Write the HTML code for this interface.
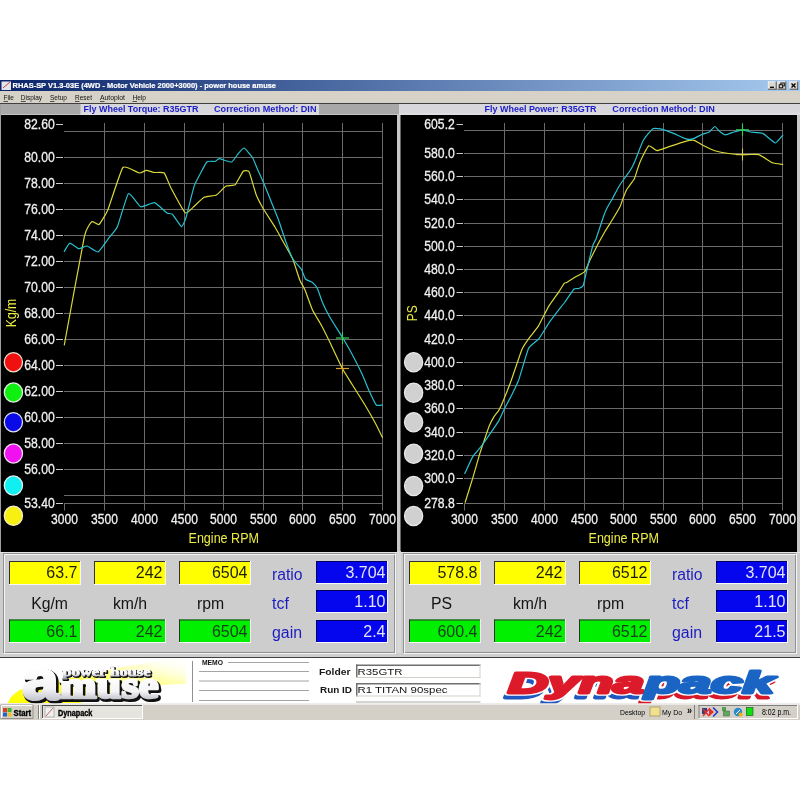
<!DOCTYPE html>
<html><head><meta charset="utf-8"><style>
html,body{margin:0;padding:0;background:#fff;}
svg{display:block;will-change:transform;}
</style></head><body>
<svg width="800" height="800" viewBox="0 0 800 800" shape-rendering="auto">
<defs><linearGradient id="tb" x1="0" x2="1" y1="0" y2="0"><stop offset="0" stop-color="#0a246a"/><stop offset="1" stop-color="#a6caf0"/></linearGradient><linearGradient id="silver" x1="0" x2="0" y1="0" y2="1"><stop offset="0" stop-color="#9a9a9a"/><stop offset="0.35" stop-color="#f4f4f4"/><stop offset="1" stop-color="#6a6a78"/></linearGradient><linearGradient id="swoosh" x1="0" x2="1" y1="1" y2="0"><stop offset="0" stop-color="#ffff20"/><stop offset="0.5" stop-color="#ffff90"/><stop offset="1" stop-color="#ffffff" stop-opacity="0"/></linearGradient></defs>
<rect x="0" y="0" width="800" height="800" fill="#ffffff" />
<rect x="0" y="80" width="800" height="640" fill="#d4d0c8" />
<rect x="0" y="80" width="800" height="11" fill="url(#tb)" />
<rect x="1.5" y="81.5" width="9.5" height="8.5" fill="#e4e2ec" />
<line x1="3" y1="88" x2="10" y2="82" stroke="#c04040" stroke-width="1" />
<text x="12.5" y="88.2" font-family="Liberation Sans" font-size="7.8" font-weight="bold" fill="#fff" text-anchor="start" textLength="263.5" lengthAdjust="spacingAndGlyphs" stroke="#fff" stroke-width="0.2">RHAS-SP V1.3-03E  (4WD - Motor Vehicle 2000+3000) - power house amuse</text>
<rect x="768" y="81.5" width="8.5" height="8" fill="#dcd8d0" />
<line x1="768" y1="81.8" x2="776.5" y2="81.8" stroke="#ffffff" stroke-width="0.6" />
<line x1="768.3" y1="81.5" x2="768.3" y2="89.5" stroke="#ffffff" stroke-width="0.6" />
<line x1="768" y1="89.2" x2="776.5" y2="89.2" stroke="#303030" stroke-width="0.8" />
<line x1="776.2" y1="81.5" x2="776.2" y2="89.5" stroke="#303030" stroke-width="0.8" />
<rect x="777.5" y="81.5" width="8.5" height="8" fill="#dcd8d0" />
<line x1="777.5" y1="81.8" x2="786.0" y2="81.8" stroke="#ffffff" stroke-width="0.6" />
<line x1="777.8" y1="81.5" x2="777.8" y2="89.5" stroke="#ffffff" stroke-width="0.6" />
<line x1="777.5" y1="89.2" x2="786.0" y2="89.2" stroke="#303030" stroke-width="0.8" />
<line x1="785.7" y1="81.5" x2="785.7" y2="89.5" stroke="#303030" stroke-width="0.8" />
<rect x="789.5" y="81.5" width="8.5" height="8" fill="#dcd8d0" />
<line x1="789.5" y1="81.8" x2="798.0" y2="81.8" stroke="#ffffff" stroke-width="0.6" />
<line x1="789.8" y1="81.5" x2="789.8" y2="89.5" stroke="#ffffff" stroke-width="0.6" />
<line x1="789.5" y1="89.2" x2="798.0" y2="89.2" stroke="#303030" stroke-width="0.8" />
<line x1="797.7" y1="81.5" x2="797.7" y2="89.5" stroke="#303030" stroke-width="0.8" />
<line x1="770" y1="87.3" x2="774" y2="87.3" stroke="#000" stroke-width="1.3" />
<rect x="780.8" y="83" width="3.5" height="3" fill="none" stroke="#000" stroke-width="0.9"/>
<rect x="779.2" y="84.8" width="3.5" height="3" fill="#dcd8d0" stroke="#000" stroke-width="0.9"/>
<line x1="791.5" y1="83.5" x2="795.5" y2="87.5" stroke="#000" stroke-width="1.2" />
<line x1="795.5" y1="83.5" x2="791.5" y2="87.5" stroke="#000" stroke-width="1.2" />
<rect x="0" y="91" width="800" height="12.5" fill="#d6d2c8" />
<text x="3.5" y="100.2" font-family="Liberation Sans" font-size="7.8" font-weight="normal" fill="#101010" text-anchor="start" textLength="10.5" lengthAdjust="spacingAndGlyphs" >File</text>
<line x1="3.5" y1="101.5" x2="8.0" y2="101.5" stroke="#303030" stroke-width="0.8" />
<text x="20.8" y="100.2" font-family="Liberation Sans" font-size="7.8" font-weight="normal" fill="#101010" text-anchor="start" textLength="21.2" lengthAdjust="spacingAndGlyphs" >Display</text>
<line x1="20.8" y1="101.5" x2="25.8" y2="101.5" stroke="#303030" stroke-width="0.8" />
<text x="50" y="100.2" font-family="Liberation Sans" font-size="7.8" font-weight="normal" fill="#101010" text-anchor="start" textLength="17" lengthAdjust="spacingAndGlyphs" >Setup</text>
<line x1="50" y1="101.5" x2="54.5" y2="101.5" stroke="#303030" stroke-width="0.8" />
<text x="75" y="100.2" font-family="Liberation Sans" font-size="7.8" font-weight="normal" fill="#101010" text-anchor="start" textLength="17" lengthAdjust="spacingAndGlyphs" >Reset</text>
<line x1="75" y1="101.5" x2="79.5" y2="101.5" stroke="#303030" stroke-width="0.8" />
<text x="100" y="100.2" font-family="Liberation Sans" font-size="7.8" font-weight="normal" fill="#101010" text-anchor="start" textLength="25" lengthAdjust="spacingAndGlyphs" >Autoplot</text>
<line x1="100" y1="101.5" x2="104.5" y2="101.5" stroke="#303030" stroke-width="0.8" />
<text x="132.5" y="100.2" font-family="Liberation Sans" font-size="7.8" font-weight="normal" fill="#101010" text-anchor="start" textLength="13.5" lengthAdjust="spacingAndGlyphs" >Help</text>
<line x1="132.5" y1="101.5" x2="137.0" y2="101.5" stroke="#303030" stroke-width="0.8" />
<line x1="0" y1="103.5" x2="800" y2="103.5" stroke="#404040" stroke-width="1" />
<rect x="0" y="104" width="800" height="11" fill="#d8d8dc" />
<line x1="0" y1="114" x2="800" y2="114" stroke="#e6e6e6" stroke-width="1" />
<rect x="0" y="104" width="80.5" height="10.5" fill="#a8a8a8" />
<rect x="319" y="104" width="80" height="10.5" fill="#a8a8a8" />
<text x="83.5" y="111.8" font-family="Liberation Sans" font-size="8.6" font-weight="bold" fill="#1c1cc8" text-anchor="start" textLength="115" lengthAdjust="spacingAndGlyphs" >Fly Wheel Torque: R35GTR</text>
<text x="214" y="111.8" font-family="Liberation Sans" font-size="8.6" font-weight="bold" fill="#1c1cc8" text-anchor="start" textLength="102.5" lengthAdjust="spacingAndGlyphs" >Correction Method: DIN</text>
<text x="484.6" y="111.8" font-family="Liberation Sans" font-size="8.6" font-weight="bold" fill="#1c1cc8" text-anchor="start" textLength="112" lengthAdjust="spacingAndGlyphs" >Fly Wheel Power: R35GTR</text>
<text x="612.3" y="111.8" font-family="Liberation Sans" font-size="8.6" font-weight="bold" fill="#1c1cc8" text-anchor="start" textLength="102.5" lengthAdjust="spacingAndGlyphs" >Correction Method: DIN</text>
<rect x="0" y="115" width="397" height="437" fill="#000" />
<rect x="0" y="104" width="1" height="453" fill="#a0a0a0" />
<rect x="397" y="115" width="3.5" height="437" fill="#c8c8c8" />
<rect x="400.5" y="115" width="397" height="437" fill="#000" />
<rect x="797" y="115" width="3" height="437" fill="#c8c8c8" />
<line x1="64.0" y1="131.5" x2="383.0" y2="131.5" stroke="#6a6a6a" stroke-width="1" />
<line x1="64.0" y1="157.5" x2="383.0" y2="157.5" stroke="#6a6a6a" stroke-width="1" />
<line x1="64.0" y1="183.5" x2="383.0" y2="183.5" stroke="#6a6a6a" stroke-width="1" />
<line x1="64.0" y1="209.5" x2="383.0" y2="209.5" stroke="#6a6a6a" stroke-width="1" />
<line x1="64.0" y1="235.5" x2="383.0" y2="235.5" stroke="#6a6a6a" stroke-width="1" />
<line x1="64.0" y1="261.5" x2="383.0" y2="261.5" stroke="#6a6a6a" stroke-width="1" />
<line x1="64.0" y1="287.5" x2="383.0" y2="287.5" stroke="#6a6a6a" stroke-width="1" />
<line x1="64.0" y1="313.5" x2="383.0" y2="313.5" stroke="#6a6a6a" stroke-width="1" />
<line x1="64.0" y1="339.5" x2="383.0" y2="339.5" stroke="#6a6a6a" stroke-width="1" />
<line x1="64.0" y1="365.5" x2="383.0" y2="365.5" stroke="#6a6a6a" stroke-width="1" />
<line x1="64.0" y1="391.5" x2="383.0" y2="391.5" stroke="#6a6a6a" stroke-width="1" />
<line x1="64.0" y1="417.5" x2="383.0" y2="417.5" stroke="#6a6a6a" stroke-width="1" />
<line x1="64.0" y1="443.5" x2="383.0" y2="443.5" stroke="#6a6a6a" stroke-width="1" />
<line x1="64.0" y1="469.5" x2="383.0" y2="469.5" stroke="#6a6a6a" stroke-width="1" />
<line x1="64.0" y1="495.5" x2="383.0" y2="495.5" stroke="#6a6a6a" stroke-width="1" />
<line x1="64.0" y1="503.5" x2="383.0" y2="503.5" stroke="#6a6a6a" stroke-width="1" />
<line x1="64.5" y1="503" x2="64.5" y2="510.5" stroke="#6a6a6a" stroke-width="1" />
<line x1="104.5" y1="123" x2="104.5" y2="510.5" stroke="#6a6a6a" stroke-width="1" />
<line x1="144.5" y1="123" x2="144.5" y2="510.5" stroke="#6a6a6a" stroke-width="1" />
<line x1="184.5" y1="123" x2="184.5" y2="510.5" stroke="#6a6a6a" stroke-width="1" />
<line x1="223.5" y1="123" x2="223.5" y2="510.5" stroke="#6a6a6a" stroke-width="1" />
<line x1="263.5" y1="123" x2="263.5" y2="510.5" stroke="#6a6a6a" stroke-width="1" />
<line x1="302.5" y1="123" x2="302.5" y2="510.5" stroke="#6a6a6a" stroke-width="1" />
<line x1="342.5" y1="123" x2="342.5" y2="510.5" stroke="#6a6a6a" stroke-width="1" />
<line x1="382.5" y1="123" x2="382.5" y2="510.5" stroke="#6a6a6a" stroke-width="1" />
<text x="54.8" y="129.0" font-family="Liberation Sans" font-size="15" font-weight="normal" fill="#f2f2f2" text-anchor="end" textLength="30.5" lengthAdjust="spacingAndGlyphs" stroke="#f0f0f0" stroke-width="0.3">82.60</text>
<line x1="56" y1="124.5" x2="63" y2="124.5" stroke="#c8c8c8" stroke-width="1" />
<text x="54.8" y="162.0" font-family="Liberation Sans" font-size="15" font-weight="normal" fill="#f2f2f2" text-anchor="end" textLength="30.5" lengthAdjust="spacingAndGlyphs" stroke="#f0f0f0" stroke-width="0.3">80.00</text>
<line x1="56" y1="157.5" x2="63" y2="157.5" stroke="#c8c8c8" stroke-width="1" />
<text x="54.8" y="188.0" font-family="Liberation Sans" font-size="15" font-weight="normal" fill="#f2f2f2" text-anchor="end" textLength="30.5" lengthAdjust="spacingAndGlyphs" stroke="#f0f0f0" stroke-width="0.3">78.00</text>
<line x1="56" y1="183.5" x2="63" y2="183.5" stroke="#c8c8c8" stroke-width="1" />
<text x="54.8" y="214.0" font-family="Liberation Sans" font-size="15" font-weight="normal" fill="#f2f2f2" text-anchor="end" textLength="30.5" lengthAdjust="spacingAndGlyphs" stroke="#f0f0f0" stroke-width="0.3">76.00</text>
<line x1="56" y1="209.5" x2="63" y2="209.5" stroke="#c8c8c8" stroke-width="1" />
<text x="54.8" y="240.0" font-family="Liberation Sans" font-size="15" font-weight="normal" fill="#f2f2f2" text-anchor="end" textLength="30.5" lengthAdjust="spacingAndGlyphs" stroke="#f0f0f0" stroke-width="0.3">74.00</text>
<line x1="56" y1="235.5" x2="63" y2="235.5" stroke="#c8c8c8" stroke-width="1" />
<text x="54.8" y="266.0" font-family="Liberation Sans" font-size="15" font-weight="normal" fill="#f2f2f2" text-anchor="end" textLength="30.5" lengthAdjust="spacingAndGlyphs" stroke="#f0f0f0" stroke-width="0.3">72.00</text>
<line x1="56" y1="261.5" x2="63" y2="261.5" stroke="#c8c8c8" stroke-width="1" />
<text x="54.8" y="292.0" font-family="Liberation Sans" font-size="15" font-weight="normal" fill="#f2f2f2" text-anchor="end" textLength="30.5" lengthAdjust="spacingAndGlyphs" stroke="#f0f0f0" stroke-width="0.3">70.00</text>
<line x1="56" y1="287.5" x2="63" y2="287.5" stroke="#c8c8c8" stroke-width="1" />
<text x="54.8" y="318.0" font-family="Liberation Sans" font-size="15" font-weight="normal" fill="#f2f2f2" text-anchor="end" textLength="30.5" lengthAdjust="spacingAndGlyphs" stroke="#f0f0f0" stroke-width="0.3">68.00</text>
<line x1="56" y1="313.5" x2="63" y2="313.5" stroke="#c8c8c8" stroke-width="1" />
<text x="54.8" y="344.0" font-family="Liberation Sans" font-size="15" font-weight="normal" fill="#f2f2f2" text-anchor="end" textLength="30.5" lengthAdjust="spacingAndGlyphs" stroke="#f0f0f0" stroke-width="0.3">66.00</text>
<line x1="56" y1="339.5" x2="63" y2="339.5" stroke="#c8c8c8" stroke-width="1" />
<text x="54.8" y="370.0" font-family="Liberation Sans" font-size="15" font-weight="normal" fill="#f2f2f2" text-anchor="end" textLength="30.5" lengthAdjust="spacingAndGlyphs" stroke="#f0f0f0" stroke-width="0.3">64.00</text>
<line x1="56" y1="365.5" x2="63" y2="365.5" stroke="#c8c8c8" stroke-width="1" />
<text x="54.8" y="396.0" font-family="Liberation Sans" font-size="15" font-weight="normal" fill="#f2f2f2" text-anchor="end" textLength="30.5" lengthAdjust="spacingAndGlyphs" stroke="#f0f0f0" stroke-width="0.3">62.00</text>
<line x1="56" y1="391.5" x2="63" y2="391.5" stroke="#c8c8c8" stroke-width="1" />
<text x="54.8" y="422.0" font-family="Liberation Sans" font-size="15" font-weight="normal" fill="#f2f2f2" text-anchor="end" textLength="30.5" lengthAdjust="spacingAndGlyphs" stroke="#f0f0f0" stroke-width="0.3">60.00</text>
<line x1="56" y1="417.5" x2="63" y2="417.5" stroke="#c8c8c8" stroke-width="1" />
<text x="54.8" y="448.0" font-family="Liberation Sans" font-size="15" font-weight="normal" fill="#f2f2f2" text-anchor="end" textLength="30.5" lengthAdjust="spacingAndGlyphs" stroke="#f0f0f0" stroke-width="0.3">58.00</text>
<line x1="56" y1="443.5" x2="63" y2="443.5" stroke="#c8c8c8" stroke-width="1" />
<text x="54.8" y="474.0" font-family="Liberation Sans" font-size="15" font-weight="normal" fill="#f2f2f2" text-anchor="end" textLength="30.5" lengthAdjust="spacingAndGlyphs" stroke="#f0f0f0" stroke-width="0.3">56.00</text>
<line x1="56" y1="469.5" x2="63" y2="469.5" stroke="#c8c8c8" stroke-width="1" />
<text x="54.8" y="508.0" font-family="Liberation Sans" font-size="15" font-weight="normal" fill="#f2f2f2" text-anchor="end" textLength="30.5" lengthAdjust="spacingAndGlyphs" stroke="#f0f0f0" stroke-width="0.3">53.40</text>
<line x1="56" y1="503.5" x2="63" y2="503.5" stroke="#c8c8c8" stroke-width="1" />
<text x="64.5" y="523.8" font-family="Liberation Sans" font-size="15" font-weight="normal" fill="#f2f2f2" text-anchor="middle" textLength="26.8" lengthAdjust="spacingAndGlyphs" stroke="#f0f0f0" stroke-width="0.3">3000</text>
<text x="104.5" y="523.8" font-family="Liberation Sans" font-size="15" font-weight="normal" fill="#f2f2f2" text-anchor="middle" textLength="26.8" lengthAdjust="spacingAndGlyphs" stroke="#f0f0f0" stroke-width="0.3">3500</text>
<text x="144.5" y="523.8" font-family="Liberation Sans" font-size="15" font-weight="normal" fill="#f2f2f2" text-anchor="middle" textLength="26.8" lengthAdjust="spacingAndGlyphs" stroke="#f0f0f0" stroke-width="0.3">4000</text>
<text x="184.5" y="523.8" font-family="Liberation Sans" font-size="15" font-weight="normal" fill="#f2f2f2" text-anchor="middle" textLength="26.8" lengthAdjust="spacingAndGlyphs" stroke="#f0f0f0" stroke-width="0.3">4500</text>
<text x="223.5" y="523.8" font-family="Liberation Sans" font-size="15" font-weight="normal" fill="#f2f2f2" text-anchor="middle" textLength="26.8" lengthAdjust="spacingAndGlyphs" stroke="#f0f0f0" stroke-width="0.3">5000</text>
<text x="263.5" y="523.8" font-family="Liberation Sans" font-size="15" font-weight="normal" fill="#f2f2f2" text-anchor="middle" textLength="26.8" lengthAdjust="spacingAndGlyphs" stroke="#f0f0f0" stroke-width="0.3">5500</text>
<text x="302.5" y="523.8" font-family="Liberation Sans" font-size="15" font-weight="normal" fill="#f2f2f2" text-anchor="middle" textLength="26.8" lengthAdjust="spacingAndGlyphs" stroke="#f0f0f0" stroke-width="0.3">6000</text>
<text x="342.5" y="523.8" font-family="Liberation Sans" font-size="15" font-weight="normal" fill="#f2f2f2" text-anchor="middle" textLength="26.8" lengthAdjust="spacingAndGlyphs" stroke="#f0f0f0" stroke-width="0.3">6500</text>
<text x="382.5" y="523.8" font-family="Liberation Sans" font-size="15" font-weight="normal" fill="#f2f2f2" text-anchor="middle" textLength="26.8" lengthAdjust="spacingAndGlyphs" stroke="#f0f0f0" stroke-width="0.3">7000</text>
<text x="188.5" y="542.8" font-family="Liberation Sans" font-size="14" font-weight="normal" fill="#ecec44" text-anchor="start" textLength="70.5" lengthAdjust="spacingAndGlyphs" >Engine RPM</text>
<text x="0" y="0" font-family="Liberation Sans" font-size="14" fill="#ecec44" text-anchor="middle" textLength="28.5" lengthAdjust="spacingAndGlyphs" transform="translate(16.3,313) rotate(-90)">Kg/m</text>
<path d="M64.30,345.00 C65.64,337.75 82.57,244.52 84.40,236.30 C86.23,228.08 90.83,222.49 91.80,221.70 C92.77,220.91 97.93,225.28 99.00,224.50 C100.07,223.72 106.21,213.80 107.80,210.00 C109.39,206.20 120.79,169.97 122.90,167.50 C125.01,165.03 137.84,172.81 139.40,173.00 C140.96,173.19 145.29,170.33 146.30,170.30 C147.31,170.27 153.31,172.32 154.50,172.50 C155.69,172.68 163.10,171.97 164.20,173.00 C165.30,174.03 169.59,185.34 171.00,188.00 C172.41,190.66 183.83,211.61 185.30,212.90 C186.77,214.19 191.75,208.45 193.00,207.40 C194.25,206.35 202.44,198.03 204.00,197.20 C205.56,196.37 214.93,195.75 216.40,195.00 C217.87,194.25 224.75,186.68 226.00,186.00 C227.25,185.32 234.05,185.79 235.20,184.80 C236.35,183.81 242.27,172.05 243.20,171.20 C244.13,170.35 248.35,170.46 249.20,172.00 C250.05,173.54 255.08,191.83 256.00,194.25 C256.92,196.67 261.72,206.03 263.00,208.25 C264.28,210.47 273.85,225.17 275.25,227.50 C276.65,229.83 282.83,241.15 284.00,243.25 C285.17,245.35 291.70,256.55 292.75,259.00 C293.80,261.45 298.93,277.93 299.75,280.00 C300.57,282.07 304.15,288.00 305.00,290.00 C305.85,292.00 311.42,307.67 312.50,310.00 C313.58,312.33 320.08,322.83 321.25,325.00 C322.42,327.17 328.58,339.58 330.00,342.50 C331.42,345.42 341.00,365.92 342.50,368.75 C344.00,371.58 351.00,382.58 352.50,385.00 C354.00,387.42 363.50,402.50 365.00,405.00 C366.50,407.50 373.83,420.33 375.00,422.50 C376.17,424.67 382.00,436.50 382.50,437.50" fill="none" stroke="#d8d838" stroke-width="1.2" stroke-linejoin="round" stroke-linecap="round"/>
<path d="M64.30,251.40 C64.67,250.85 68.83,243.38 69.80,243.20 C70.77,243.02 77.75,248.51 78.90,248.70 C80.05,248.89 85.82,245.78 87.10,246.00 C88.38,246.22 96.63,252.55 98.10,252.00 C99.57,251.45 107.81,239.39 109.10,237.70 C110.39,236.01 116.11,229.64 117.40,226.70 C118.69,223.76 126.84,194.93 128.40,193.60 C129.96,192.27 139.06,206.19 140.80,206.80 C142.54,207.41 152.76,202.29 154.50,202.70 C156.24,203.11 165.71,212.13 166.90,212.90 C168.09,213.67 171.43,213.38 172.40,214.30 C173.37,215.22 180.58,226.52 181.50,226.70 C182.42,226.88 185.34,219.75 186.20,217.00 C187.06,214.25 193.03,189.07 194.40,185.40 C195.77,181.73 205.43,163.59 206.80,162.00 C208.17,160.41 214.17,161.72 215.00,161.50 C215.83,161.28 218.09,158.67 219.20,158.70 C220.31,158.73 230.35,162.31 231.60,162.00 C232.85,161.69 237.17,154.93 238.00,154.00 C238.83,153.07 243.03,147.77 244.00,148.00 C244.97,148.23 251.58,156.05 252.50,157.50 C253.42,158.95 256.93,167.88 257.75,169.75 C258.57,171.62 263.82,183.28 264.75,185.50 C265.68,187.72 270.82,200.67 271.75,203.00 C272.68,205.33 277.82,217.93 278.75,220.50 C279.68,223.07 284.82,238.93 285.75,241.50 C286.68,244.07 291.70,257.13 292.75,259.00 C293.80,260.87 300.65,268.17 301.50,269.50 C302.35,270.83 304.77,278.13 305.50,279.00 C306.23,279.87 311.70,281.85 312.50,282.50 C313.30,283.15 316.83,287.42 317.50,288.75 C318.17,290.08 321.67,300.58 322.50,302.50 C323.33,304.42 328.67,315.17 330.00,317.50 C331.33,319.83 341.00,335.00 342.50,337.50 C344.00,340.00 351.17,352.50 352.50,355.00 C353.83,357.50 361.42,372.67 362.50,375.00 C363.58,377.33 367.83,388.00 368.75,390.00 C369.67,392.00 375.33,404.00 376.25,405.00 C377.17,406.00 382.08,405.00 382.50,405.00" fill="none" stroke="#28c0d0" stroke-width="1.2" stroke-linejoin="round" stroke-linecap="round"/>
<line x1="336.0" y1="338" x2="349.0" y2="338" stroke="#30d050" stroke-width="1.2" />
<line x1="342.5" y1="332" x2="342.5" y2="344" stroke="#30d050" stroke-width="1.1" />
<line x1="336.0" y1="368.5" x2="349.0" y2="368.5" stroke="#d8a030" stroke-width="1.2" />
<line x1="342.5" y1="362.5" x2="342.5" y2="374.5" stroke="#d8a030" stroke-width="1.1" />
<ellipse cx="13.4" cy="362.2" rx="9.1" ry="9.6" fill="#f01010" stroke="#f0e0d0" stroke-width="1.3"/>
<ellipse cx="13.4" cy="392.5" rx="9.1" ry="9.6" fill="#10f010" stroke="#e0f0e0" stroke-width="1.3"/>
<ellipse cx="13.4" cy="422.2" rx="9.1" ry="9.6" fill="#0a0ae8" stroke="#e0e0f0" stroke-width="1.3"/>
<ellipse cx="13.4" cy="453.5" rx="9.1" ry="9.6" fill="#f010f0" stroke="#f0e0f0" stroke-width="1.3"/>
<ellipse cx="13.4" cy="485.5" rx="9.1" ry="9.6" fill="#10f0f0" stroke="#e0f0f0" stroke-width="1.3"/>
<ellipse cx="13.4" cy="515.8" rx="9.1" ry="9.6" fill="#f8f010" stroke="#f0f0d0" stroke-width="1.3"/>
<line x1="464.0" y1="130.5" x2="783.0" y2="130.5" stroke="#6a6a6a" stroke-width="1" />
<line x1="464.0" y1="153.5" x2="783.0" y2="153.5" stroke="#6a6a6a" stroke-width="1" />
<line x1="464.0" y1="176.5" x2="783.0" y2="176.5" stroke="#6a6a6a" stroke-width="1" />
<line x1="464.0" y1="199.5" x2="783.0" y2="199.5" stroke="#6a6a6a" stroke-width="1" />
<line x1="464.0" y1="223.5" x2="783.0" y2="223.5" stroke="#6a6a6a" stroke-width="1" />
<line x1="464.0" y1="246.5" x2="783.0" y2="246.5" stroke="#6a6a6a" stroke-width="1" />
<line x1="464.0" y1="269.5" x2="783.0" y2="269.5" stroke="#6a6a6a" stroke-width="1" />
<line x1="464.0" y1="292.5" x2="783.0" y2="292.5" stroke="#6a6a6a" stroke-width="1" />
<line x1="464.0" y1="315.5" x2="783.0" y2="315.5" stroke="#6a6a6a" stroke-width="1" />
<line x1="464.0" y1="339.5" x2="783.0" y2="339.5" stroke="#6a6a6a" stroke-width="1" />
<line x1="464.0" y1="362.5" x2="783.0" y2="362.5" stroke="#6a6a6a" stroke-width="1" />
<line x1="464.0" y1="385.5" x2="783.0" y2="385.5" stroke="#6a6a6a" stroke-width="1" />
<line x1="464.0" y1="408.5" x2="783.0" y2="408.5" stroke="#6a6a6a" stroke-width="1" />
<line x1="464.0" y1="432.5" x2="783.0" y2="432.5" stroke="#6a6a6a" stroke-width="1" />
<line x1="464.0" y1="455.5" x2="783.0" y2="455.5" stroke="#6a6a6a" stroke-width="1" />
<line x1="464.0" y1="478.5" x2="783.0" y2="478.5" stroke="#6a6a6a" stroke-width="1" />
<line x1="464.0" y1="503.5" x2="783.0" y2="503.5" stroke="#6a6a6a" stroke-width="1" />
<line x1="464.5" y1="503" x2="464.5" y2="510.5" stroke="#6a6a6a" stroke-width="1" />
<line x1="504.5" y1="123" x2="504.5" y2="510.5" stroke="#6a6a6a" stroke-width="1" />
<line x1="544.5" y1="123" x2="544.5" y2="510.5" stroke="#6a6a6a" stroke-width="1" />
<line x1="584.5" y1="123" x2="584.5" y2="510.5" stroke="#6a6a6a" stroke-width="1" />
<line x1="623.5" y1="123" x2="623.5" y2="510.5" stroke="#6a6a6a" stroke-width="1" />
<line x1="663.5" y1="123" x2="663.5" y2="510.5" stroke="#6a6a6a" stroke-width="1" />
<line x1="702.5" y1="123" x2="702.5" y2="510.5" stroke="#6a6a6a" stroke-width="1" />
<line x1="742.5" y1="123" x2="742.5" y2="510.5" stroke="#6a6a6a" stroke-width="1" />
<line x1="782.5" y1="123" x2="782.5" y2="510.5" stroke="#6a6a6a" stroke-width="1" />
<text x="454.8" y="129.0" font-family="Liberation Sans" font-size="15" font-weight="normal" fill="#f2f2f2" text-anchor="end" textLength="30.5" lengthAdjust="spacingAndGlyphs" stroke="#f0f0f0" stroke-width="0.3">605.2</text>
<line x1="456.5" y1="124.5" x2="463" y2="124.5" stroke="#c8c8c8" stroke-width="1" />
<text x="454.8" y="158.0" font-family="Liberation Sans" font-size="15" font-weight="normal" fill="#f2f2f2" text-anchor="end" textLength="30.5" lengthAdjust="spacingAndGlyphs" stroke="#f0f0f0" stroke-width="0.3">580.0</text>
<line x1="456.5" y1="153.5" x2="463" y2="153.5" stroke="#c8c8c8" stroke-width="1" />
<text x="454.8" y="181.0" font-family="Liberation Sans" font-size="15" font-weight="normal" fill="#f2f2f2" text-anchor="end" textLength="30.5" lengthAdjust="spacingAndGlyphs" stroke="#f0f0f0" stroke-width="0.3">560.0</text>
<line x1="456.5" y1="176.5" x2="463" y2="176.5" stroke="#c8c8c8" stroke-width="1" />
<text x="454.8" y="204.0" font-family="Liberation Sans" font-size="15" font-weight="normal" fill="#f2f2f2" text-anchor="end" textLength="30.5" lengthAdjust="spacingAndGlyphs" stroke="#f0f0f0" stroke-width="0.3">540.0</text>
<line x1="456.5" y1="199.5" x2="463" y2="199.5" stroke="#c8c8c8" stroke-width="1" />
<text x="454.8" y="228.0" font-family="Liberation Sans" font-size="15" font-weight="normal" fill="#f2f2f2" text-anchor="end" textLength="30.5" lengthAdjust="spacingAndGlyphs" stroke="#f0f0f0" stroke-width="0.3">520.0</text>
<line x1="456.5" y1="223.5" x2="463" y2="223.5" stroke="#c8c8c8" stroke-width="1" />
<text x="454.8" y="251.0" font-family="Liberation Sans" font-size="15" font-weight="normal" fill="#f2f2f2" text-anchor="end" textLength="30.5" lengthAdjust="spacingAndGlyphs" stroke="#f0f0f0" stroke-width="0.3">500.0</text>
<line x1="456.5" y1="246.5" x2="463" y2="246.5" stroke="#c8c8c8" stroke-width="1" />
<text x="454.8" y="274.0" font-family="Liberation Sans" font-size="15" font-weight="normal" fill="#f2f2f2" text-anchor="end" textLength="30.5" lengthAdjust="spacingAndGlyphs" stroke="#f0f0f0" stroke-width="0.3">480.0</text>
<line x1="456.5" y1="269.5" x2="463" y2="269.5" stroke="#c8c8c8" stroke-width="1" />
<text x="454.8" y="297.0" font-family="Liberation Sans" font-size="15" font-weight="normal" fill="#f2f2f2" text-anchor="end" textLength="30.5" lengthAdjust="spacingAndGlyphs" stroke="#f0f0f0" stroke-width="0.3">460.0</text>
<line x1="456.5" y1="292.5" x2="463" y2="292.5" stroke="#c8c8c8" stroke-width="1" />
<text x="454.8" y="320.0" font-family="Liberation Sans" font-size="15" font-weight="normal" fill="#f2f2f2" text-anchor="end" textLength="30.5" lengthAdjust="spacingAndGlyphs" stroke="#f0f0f0" stroke-width="0.3">440.0</text>
<line x1="456.5" y1="315.5" x2="463" y2="315.5" stroke="#c8c8c8" stroke-width="1" />
<text x="454.8" y="344.0" font-family="Liberation Sans" font-size="15" font-weight="normal" fill="#f2f2f2" text-anchor="end" textLength="30.5" lengthAdjust="spacingAndGlyphs" stroke="#f0f0f0" stroke-width="0.3">420.0</text>
<line x1="456.5" y1="339.5" x2="463" y2="339.5" stroke="#c8c8c8" stroke-width="1" />
<text x="454.8" y="367.0" font-family="Liberation Sans" font-size="15" font-weight="normal" fill="#f2f2f2" text-anchor="end" textLength="30.5" lengthAdjust="spacingAndGlyphs" stroke="#f0f0f0" stroke-width="0.3">400.0</text>
<line x1="456.5" y1="362.5" x2="463" y2="362.5" stroke="#c8c8c8" stroke-width="1" />
<text x="454.8" y="390.0" font-family="Liberation Sans" font-size="15" font-weight="normal" fill="#f2f2f2" text-anchor="end" textLength="30.5" lengthAdjust="spacingAndGlyphs" stroke="#f0f0f0" stroke-width="0.3">380.0</text>
<line x1="456.5" y1="385.5" x2="463" y2="385.5" stroke="#c8c8c8" stroke-width="1" />
<text x="454.8" y="413.0" font-family="Liberation Sans" font-size="15" font-weight="normal" fill="#f2f2f2" text-anchor="end" textLength="30.5" lengthAdjust="spacingAndGlyphs" stroke="#f0f0f0" stroke-width="0.3">360.0</text>
<line x1="456.5" y1="408.5" x2="463" y2="408.5" stroke="#c8c8c8" stroke-width="1" />
<text x="454.8" y="437.0" font-family="Liberation Sans" font-size="15" font-weight="normal" fill="#f2f2f2" text-anchor="end" textLength="30.5" lengthAdjust="spacingAndGlyphs" stroke="#f0f0f0" stroke-width="0.3">340.0</text>
<line x1="456.5" y1="432.5" x2="463" y2="432.5" stroke="#c8c8c8" stroke-width="1" />
<text x="454.8" y="460.0" font-family="Liberation Sans" font-size="15" font-weight="normal" fill="#f2f2f2" text-anchor="end" textLength="30.5" lengthAdjust="spacingAndGlyphs" stroke="#f0f0f0" stroke-width="0.3">320.0</text>
<line x1="456.5" y1="455.5" x2="463" y2="455.5" stroke="#c8c8c8" stroke-width="1" />
<text x="454.8" y="483.0" font-family="Liberation Sans" font-size="15" font-weight="normal" fill="#f2f2f2" text-anchor="end" textLength="30.5" lengthAdjust="spacingAndGlyphs" stroke="#f0f0f0" stroke-width="0.3">300.0</text>
<line x1="456.5" y1="478.5" x2="463" y2="478.5" stroke="#c8c8c8" stroke-width="1" />
<text x="454.8" y="508.0" font-family="Liberation Sans" font-size="15" font-weight="normal" fill="#f2f2f2" text-anchor="end" textLength="30.5" lengthAdjust="spacingAndGlyphs" stroke="#f0f0f0" stroke-width="0.3">278.8</text>
<line x1="456.5" y1="503.5" x2="463" y2="503.5" stroke="#c8c8c8" stroke-width="1" />
<text x="464.5" y="523.8" font-family="Liberation Sans" font-size="15" font-weight="normal" fill="#f2f2f2" text-anchor="middle" textLength="26.8" lengthAdjust="spacingAndGlyphs" stroke="#f0f0f0" stroke-width="0.3">3000</text>
<text x="504.5" y="523.8" font-family="Liberation Sans" font-size="15" font-weight="normal" fill="#f2f2f2" text-anchor="middle" textLength="26.8" lengthAdjust="spacingAndGlyphs" stroke="#f0f0f0" stroke-width="0.3">3500</text>
<text x="544.5" y="523.8" font-family="Liberation Sans" font-size="15" font-weight="normal" fill="#f2f2f2" text-anchor="middle" textLength="26.8" lengthAdjust="spacingAndGlyphs" stroke="#f0f0f0" stroke-width="0.3">4000</text>
<text x="584.5" y="523.8" font-family="Liberation Sans" font-size="15" font-weight="normal" fill="#f2f2f2" text-anchor="middle" textLength="26.8" lengthAdjust="spacingAndGlyphs" stroke="#f0f0f0" stroke-width="0.3">4500</text>
<text x="623.5" y="523.8" font-family="Liberation Sans" font-size="15" font-weight="normal" fill="#f2f2f2" text-anchor="middle" textLength="26.8" lengthAdjust="spacingAndGlyphs" stroke="#f0f0f0" stroke-width="0.3">5000</text>
<text x="663.5" y="523.8" font-family="Liberation Sans" font-size="15" font-weight="normal" fill="#f2f2f2" text-anchor="middle" textLength="26.8" lengthAdjust="spacingAndGlyphs" stroke="#f0f0f0" stroke-width="0.3">5500</text>
<text x="702.5" y="523.8" font-family="Liberation Sans" font-size="15" font-weight="normal" fill="#f2f2f2" text-anchor="middle" textLength="26.8" lengthAdjust="spacingAndGlyphs" stroke="#f0f0f0" stroke-width="0.3">6000</text>
<text x="742.5" y="523.8" font-family="Liberation Sans" font-size="15" font-weight="normal" fill="#f2f2f2" text-anchor="middle" textLength="26.8" lengthAdjust="spacingAndGlyphs" stroke="#f0f0f0" stroke-width="0.3">6500</text>
<text x="782.5" y="523.8" font-family="Liberation Sans" font-size="15" font-weight="normal" fill="#f2f2f2" text-anchor="middle" textLength="26.8" lengthAdjust="spacingAndGlyphs" stroke="#f0f0f0" stroke-width="0.3">7000</text>
<text x="588.5" y="542.8" font-family="Liberation Sans" font-size="14" font-weight="normal" fill="#ecec44" text-anchor="start" textLength="70.5" lengthAdjust="spacingAndGlyphs" >Engine RPM</text>
<text x="0" y="0" font-family="Liberation Sans" font-size="14" fill="#ecec44" text-anchor="middle" textLength="16" lengthAdjust="spacingAndGlyphs" transform="translate(417,313.2) rotate(-90)">PS</text>
<path d="M465.20,502.30 C465.71,500.65 471.95,480.77 472.90,477.60 C473.85,474.43 478.64,457.29 479.40,454.80 C480.16,452.31 483.65,442.10 484.30,440.20 C484.95,438.30 488.45,427.87 489.10,426.30 C489.75,424.73 493.35,417.68 494.00,416.60 C494.65,415.52 498.25,411.24 498.90,410.10 C499.55,408.96 502.97,401.51 503.80,399.50 C504.63,397.49 510.19,383.35 511.40,380.00 C512.61,376.65 520.81,352.01 522.00,349.20 C523.19,346.39 528.22,339.32 529.30,337.80 C530.38,336.28 536.90,328.51 538.20,326.40 C539.50,324.29 547.45,308.37 548.80,306.10 C550.15,303.83 557.47,293.82 558.50,292.30 C559.53,290.78 563.65,283.95 564.20,283.30 C564.75,282.65 565.98,282.90 566.70,282.50 C567.42,282.10 573.80,277.97 575.00,277.25 C576.20,276.53 583.75,272.85 584.75,271.70 C585.75,270.55 589.15,261.78 590.00,260.00 C590.85,258.22 596.50,246.90 597.50,245.00 C598.50,243.10 604.00,233.20 605.00,231.50 C606.00,229.80 611.50,221.15 612.50,219.50 C613.50,217.85 619.30,208.15 620.00,206.75 C620.70,205.35 622.55,199.65 623.00,198.50 C623.45,197.35 626.00,190.80 626.75,189.50 C627.50,188.20 633.55,180.30 634.25,179.00 C634.95,177.70 636.83,171.21 637.25,170.00 C637.67,168.79 639.73,162.51 640.50,160.90 C641.27,159.29 647.70,146.48 648.80,145.80 C649.90,145.12 655.72,150.61 657.00,150.70 C658.28,150.79 666.17,147.71 668.00,147.10 C669.83,146.49 682.76,142.05 684.50,141.60 C686.24,141.15 692.81,140.02 694.10,140.30 C695.39,140.58 702.42,145.11 703.80,145.80 C705.18,146.49 713.15,150.19 714.80,150.70 C716.45,151.21 726.63,153.24 728.50,153.50 C730.37,153.76 740.78,154.53 742.80,154.60 C744.82,154.67 756.82,154.05 758.80,154.60 C760.78,155.15 770.91,162.14 772.50,162.80 C774.09,163.46 782.02,164.39 782.70,164.50" fill="none" stroke="#d8d838" stroke-width="1.2" stroke-linejoin="round" stroke-linecap="round"/>
<path d="M464.75,473.50 C465.29,472.36 471.82,458.19 472.90,456.40 C473.98,454.61 479.70,448.43 481.00,446.70 C482.30,444.97 491.21,432.14 492.40,430.40 C493.59,428.66 498.09,422.06 498.90,420.60 C499.71,419.14 503.79,410.12 504.60,408.50 C505.41,406.88 510.16,398.20 511.10,396.30 C512.04,394.40 517.54,383.19 518.70,380.00 C519.86,376.81 527.15,351.16 528.50,348.40 C529.85,345.64 537.65,340.28 539.00,338.60 C540.35,336.92 547.50,325.09 548.80,323.20 C550.10,321.31 557.42,311.61 558.50,310.20 C559.58,308.79 563.97,303.41 565.00,302.00 C566.03,300.59 573.08,289.90 574.00,289.00 C574.92,288.10 578.13,288.73 578.75,288.50 C579.37,288.27 582.65,287.00 583.25,285.50 C583.85,284.00 587.10,268.70 587.75,266.00 C588.40,263.30 592.45,246.80 593.00,245.00 C593.55,243.20 595.30,240.90 596.00,239.00 C596.70,237.10 602.75,218.60 603.50,216.50 C604.25,214.40 606.65,208.70 607.25,207.50 C607.85,206.30 611.75,199.85 612.50,198.50 C613.25,197.15 617.70,188.60 618.50,187.25 C619.30,185.90 623.70,179.40 624.50,178.25 C625.30,177.10 629.80,171.16 630.50,170.00 C631.20,168.84 634.15,162.88 635.00,160.90 C635.85,158.92 642.11,142.45 643.30,140.30 C644.49,138.15 651.62,129.43 652.90,128.70 C654.18,127.97 661.13,128.99 662.50,129.30 C663.87,129.61 671.94,132.76 673.50,133.40 C675.06,134.04 684.61,138.53 685.90,138.90 C687.19,139.27 691.70,139.21 692.80,138.90 C693.90,138.59 701.30,134.66 702.40,134.20 C703.50,133.74 708.47,132.51 709.30,132.00 C710.13,131.49 714.07,126.50 714.80,126.50 C715.53,126.50 719.57,131.45 720.30,132.00 C721.03,132.55 724.89,134.80 725.80,134.80 C726.71,134.80 732.87,132.33 734.00,132.00 C735.13,131.67 741.70,129.80 742.80,129.80 C743.90,129.80 749.16,131.76 750.50,132.00 C751.84,132.24 761.25,132.67 762.90,133.40 C764.55,134.13 773.98,142.87 775.30,143.00 C776.62,143.13 782.21,135.81 782.70,135.30" fill="none" stroke="#28c0d0" stroke-width="1.2" stroke-linejoin="round" stroke-linecap="round"/>
<line x1="736.0" y1="129.8" x2="749.0" y2="129.8" stroke="#30d050" stroke-width="1.2" />
<line x1="742.5" y1="123.80000000000001" x2="742.5" y2="135.8" stroke="#30d050" stroke-width="1.1" />
<line x1="736.0" y1="154.6" x2="749.0" y2="154.6" stroke="#d8d040" stroke-width="1.2" />
<line x1="742.5" y1="148.6" x2="742.5" y2="160.6" stroke="#d8d040" stroke-width="1.1" />
<ellipse cx="413.6" cy="362.2" rx="9.1" ry="9.6" fill="#d0d0d0" stroke="#e8e8e8" stroke-width="1.3"/>
<ellipse cx="413.6" cy="392.7" rx="9.1" ry="9.6" fill="#d0d0d0" stroke="#e8e8e8" stroke-width="1.3"/>
<ellipse cx="413.6" cy="422.2" rx="9.1" ry="9.6" fill="#d0d0d0" stroke="#e8e8e8" stroke-width="1.3"/>
<ellipse cx="413.6" cy="453.75" rx="9.1" ry="9.6" fill="#d0d0d0" stroke="#e8e8e8" stroke-width="1.3"/>
<ellipse cx="413.6" cy="486" rx="9.1" ry="9.6" fill="#d0d0d0" stroke="#e8e8e8" stroke-width="1.3"/>
<ellipse cx="413.6" cy="516" rx="9.1" ry="9.6" fill="#d0d0d0" stroke="#e8e8e8" stroke-width="1.3"/>
<rect x="0" y="552" width="800" height="106" fill="#cdcdcd" />
<line x1="0" y1="552.5" x2="800" y2="552.5" stroke="#e4e4e4" stroke-width="1" />
<rect x="3.5" y="553.5" width="391" height="99" fill="none" stroke="#909090" stroke-width="1"/>
<rect x="4.5" y="554.5" width="391" height="99" fill="none" stroke="#f4f4f4" stroke-width="1"/>
<rect x="9" y="561" width="71" height="23" fill="#ffff00" />
<line x1="9" y1="561.5" x2="80" y2="561.5" stroke="#303030" stroke-width="1" />
<line x1="9.5" y1="561" x2="9.5" y2="584" stroke="#303030" stroke-width="1" />
<line x1="9" y1="584.5" x2="80.5" y2="584.5" stroke="#f8f8f8" stroke-width="1" />
<line x1="80.5" y1="561" x2="80.5" y2="585" stroke="#f8f8f8" stroke-width="1" />
<text x="77.5" y="578.2" font-family="Liberation Sans" font-size="16" font-weight="normal" fill="#1e1e10" text-anchor="end" >63.7</text>
<rect x="9" y="619.5" width="71" height="22.5" fill="#00f000" />
<line x1="9" y1="620.0" x2="80" y2="620.0" stroke="#303030" stroke-width="1" />
<line x1="9.5" y1="619.5" x2="9.5" y2="642.0" stroke="#303030" stroke-width="1" />
<line x1="9" y1="642.5" x2="80.5" y2="642.5" stroke="#f8f8f8" stroke-width="1" />
<line x1="80.5" y1="619.5" x2="80.5" y2="643.0" stroke="#f8f8f8" stroke-width="1" />
<text x="77.5" y="636.5" font-family="Liberation Sans" font-size="16" font-weight="normal" fill="#184018" text-anchor="end" >66.1</text>
<rect x="94" y="561" width="71" height="23" fill="#ffff00" />
<line x1="94" y1="561.5" x2="165" y2="561.5" stroke="#303030" stroke-width="1" />
<line x1="94.5" y1="561" x2="94.5" y2="584" stroke="#303030" stroke-width="1" />
<line x1="94" y1="584.5" x2="165.5" y2="584.5" stroke="#f8f8f8" stroke-width="1" />
<line x1="165.5" y1="561" x2="165.5" y2="585" stroke="#f8f8f8" stroke-width="1" />
<text x="162.5" y="578.2" font-family="Liberation Sans" font-size="16" font-weight="normal" fill="#1e1e10" text-anchor="end" >242</text>
<rect x="94" y="619.5" width="71" height="22.5" fill="#00f000" />
<line x1="94" y1="620.0" x2="165" y2="620.0" stroke="#303030" stroke-width="1" />
<line x1="94.5" y1="619.5" x2="94.5" y2="642.0" stroke="#303030" stroke-width="1" />
<line x1="94" y1="642.5" x2="165.5" y2="642.5" stroke="#f8f8f8" stroke-width="1" />
<line x1="165.5" y1="619.5" x2="165.5" y2="643.0" stroke="#f8f8f8" stroke-width="1" />
<text x="162.5" y="636.5" font-family="Liberation Sans" font-size="16" font-weight="normal" fill="#184018" text-anchor="end" >242</text>
<rect x="179" y="561" width="71" height="23" fill="#ffff00" />
<line x1="179" y1="561.5" x2="250" y2="561.5" stroke="#303030" stroke-width="1" />
<line x1="179.5" y1="561" x2="179.5" y2="584" stroke="#303030" stroke-width="1" />
<line x1="179" y1="584.5" x2="250.5" y2="584.5" stroke="#f8f8f8" stroke-width="1" />
<line x1="250.5" y1="561" x2="250.5" y2="585" stroke="#f8f8f8" stroke-width="1" />
<text x="247.5" y="578.2" font-family="Liberation Sans" font-size="16" font-weight="normal" fill="#1e1e10" text-anchor="end" >6504</text>
<rect x="179" y="619.5" width="71" height="22.5" fill="#00f000" />
<line x1="179" y1="620.0" x2="250" y2="620.0" stroke="#303030" stroke-width="1" />
<line x1="179.5" y1="619.5" x2="179.5" y2="642.0" stroke="#303030" stroke-width="1" />
<line x1="179" y1="642.5" x2="250.5" y2="642.5" stroke="#f8f8f8" stroke-width="1" />
<line x1="250.5" y1="619.5" x2="250.5" y2="643.0" stroke="#f8f8f8" stroke-width="1" />
<text x="247.5" y="636.5" font-family="Liberation Sans" font-size="16" font-weight="normal" fill="#184018" text-anchor="end" >6504</text>
<text x="49.6" y="609.4" font-family="Liberation Sans" font-size="15.8" font-weight="normal" fill="#141414" text-anchor="middle" >Kg/m</text>
<text x="130" y="609.4" font-family="Liberation Sans" font-size="15.8" font-weight="normal" fill="#141414" text-anchor="middle" >km/h</text>
<text x="210.5" y="609.4" font-family="Liberation Sans" font-size="15.8" font-weight="normal" fill="#141414" text-anchor="middle" >rpm</text>
<rect x="316" y="561" width="71" height="22" fill="#0505ee" />
<line x1="316" y1="561.5" x2="387" y2="561.5" stroke="#000060" stroke-width="1" />
<line x1="316.5" y1="561" x2="316.5" y2="583" stroke="#000060" stroke-width="1" />
<line x1="316" y1="583.5" x2="387.5" y2="583.5" stroke="#f8f8f8" stroke-width="1" />
<line x1="387.5" y1="561" x2="387.5" y2="584" stroke="#f8f8f8" stroke-width="1" />
<text x="385.5" y="578.2" font-family="Liberation Sans" font-size="16" font-weight="normal" fill="#e4e4f4" text-anchor="end" >3.704</text>
<rect x="316" y="590" width="71" height="22" fill="#0505ee" />
<line x1="316" y1="590.5" x2="387" y2="590.5" stroke="#000060" stroke-width="1" />
<line x1="316.5" y1="590" x2="316.5" y2="612" stroke="#000060" stroke-width="1" />
<line x1="316" y1="612.5" x2="387.5" y2="612.5" stroke="#f8f8f8" stroke-width="1" />
<line x1="387.5" y1="590" x2="387.5" y2="613" stroke="#f8f8f8" stroke-width="1" />
<text x="385.5" y="607.2" font-family="Liberation Sans" font-size="16" font-weight="normal" fill="#e4e4f4" text-anchor="end" >1.10</text>
<rect x="316" y="620" width="71" height="22" fill="#0505ee" />
<line x1="316" y1="620.5" x2="387" y2="620.5" stroke="#000060" stroke-width="1" />
<line x1="316.5" y1="620" x2="316.5" y2="642" stroke="#000060" stroke-width="1" />
<line x1="316" y1="642.5" x2="387.5" y2="642.5" stroke="#f8f8f8" stroke-width="1" />
<line x1="387.5" y1="620" x2="387.5" y2="643" stroke="#f8f8f8" stroke-width="1" />
<text x="385.5" y="637.2" font-family="Liberation Sans" font-size="16" font-weight="normal" fill="#e4e4f4" text-anchor="end" >2.4</text>
<text x="272" y="579.8" font-family="Liberation Sans" font-size="16" font-weight="normal" fill="#1c1cc0" text-anchor="start" textLength="30.6" lengthAdjust="spacingAndGlyphs" >ratio</text>
<text x="272" y="608.8" font-family="Liberation Sans" font-size="16" font-weight="normal" fill="#1c1cc0" text-anchor="start" textLength="16.8" lengthAdjust="spacingAndGlyphs" >tcf</text>
<text x="272" y="638.2" font-family="Liberation Sans" font-size="16" font-weight="normal" fill="#1c1cc0" text-anchor="start" textLength="30" lengthAdjust="spacingAndGlyphs" >gain</text>
<rect x="403.5" y="553.5" width="392" height="99" fill="none" stroke="#909090" stroke-width="1"/>
<rect x="404.5" y="554.5" width="392" height="99" fill="none" stroke="#f4f4f4" stroke-width="1"/>
<rect x="409" y="561" width="71" height="23" fill="#ffff00" />
<line x1="409" y1="561.5" x2="480" y2="561.5" stroke="#303030" stroke-width="1" />
<line x1="409.5" y1="561" x2="409.5" y2="584" stroke="#303030" stroke-width="1" />
<line x1="409" y1="584.5" x2="480.5" y2="584.5" stroke="#f8f8f8" stroke-width="1" />
<line x1="480.5" y1="561" x2="480.5" y2="585" stroke="#f8f8f8" stroke-width="1" />
<text x="477.5" y="578.2" font-family="Liberation Sans" font-size="16" font-weight="normal" fill="#1e1e10" text-anchor="end" >578.8</text>
<rect x="409" y="619.5" width="71" height="22.5" fill="#00f000" />
<line x1="409" y1="620.0" x2="480" y2="620.0" stroke="#303030" stroke-width="1" />
<line x1="409.5" y1="619.5" x2="409.5" y2="642.0" stroke="#303030" stroke-width="1" />
<line x1="409" y1="642.5" x2="480.5" y2="642.5" stroke="#f8f8f8" stroke-width="1" />
<line x1="480.5" y1="619.5" x2="480.5" y2="643.0" stroke="#f8f8f8" stroke-width="1" />
<text x="477.5" y="636.5" font-family="Liberation Sans" font-size="16" font-weight="normal" fill="#184018" text-anchor="end" >600.4</text>
<rect x="494" y="561" width="71" height="23" fill="#ffff00" />
<line x1="494" y1="561.5" x2="565" y2="561.5" stroke="#303030" stroke-width="1" />
<line x1="494.5" y1="561" x2="494.5" y2="584" stroke="#303030" stroke-width="1" />
<line x1="494" y1="584.5" x2="565.5" y2="584.5" stroke="#f8f8f8" stroke-width="1" />
<line x1="565.5" y1="561" x2="565.5" y2="585" stroke="#f8f8f8" stroke-width="1" />
<text x="562.5" y="578.2" font-family="Liberation Sans" font-size="16" font-weight="normal" fill="#1e1e10" text-anchor="end" >242</text>
<rect x="494" y="619.5" width="71" height="22.5" fill="#00f000" />
<line x1="494" y1="620.0" x2="565" y2="620.0" stroke="#303030" stroke-width="1" />
<line x1="494.5" y1="619.5" x2="494.5" y2="642.0" stroke="#303030" stroke-width="1" />
<line x1="494" y1="642.5" x2="565.5" y2="642.5" stroke="#f8f8f8" stroke-width="1" />
<line x1="565.5" y1="619.5" x2="565.5" y2="643.0" stroke="#f8f8f8" stroke-width="1" />
<text x="562.5" y="636.5" font-family="Liberation Sans" font-size="16" font-weight="normal" fill="#184018" text-anchor="end" >242</text>
<rect x="579" y="561" width="71" height="23" fill="#ffff00" />
<line x1="579" y1="561.5" x2="650" y2="561.5" stroke="#303030" stroke-width="1" />
<line x1="579.5" y1="561" x2="579.5" y2="584" stroke="#303030" stroke-width="1" />
<line x1="579" y1="584.5" x2="650.5" y2="584.5" stroke="#f8f8f8" stroke-width="1" />
<line x1="650.5" y1="561" x2="650.5" y2="585" stroke="#f8f8f8" stroke-width="1" />
<text x="647.5" y="578.2" font-family="Liberation Sans" font-size="16" font-weight="normal" fill="#1e1e10" text-anchor="end" >6512</text>
<rect x="579" y="619.5" width="71" height="22.5" fill="#00f000" />
<line x1="579" y1="620.0" x2="650" y2="620.0" stroke="#303030" stroke-width="1" />
<line x1="579.5" y1="619.5" x2="579.5" y2="642.0" stroke="#303030" stroke-width="1" />
<line x1="579" y1="642.5" x2="650.5" y2="642.5" stroke="#f8f8f8" stroke-width="1" />
<line x1="650.5" y1="619.5" x2="650.5" y2="643.0" stroke="#f8f8f8" stroke-width="1" />
<text x="647.5" y="636.5" font-family="Liberation Sans" font-size="16" font-weight="normal" fill="#184018" text-anchor="end" >6512</text>
<text x="441.5" y="609.4" font-family="Liberation Sans" font-size="15.8" font-weight="normal" fill="#141414" text-anchor="middle" >PS</text>
<text x="530" y="609.4" font-family="Liberation Sans" font-size="15.8" font-weight="normal" fill="#141414" text-anchor="middle" >km/h</text>
<text x="610.5" y="609.4" font-family="Liberation Sans" font-size="15.8" font-weight="normal" fill="#141414" text-anchor="middle" >rpm</text>
<rect x="716" y="561" width="71" height="22" fill="#0505ee" />
<line x1="716" y1="561.5" x2="787" y2="561.5" stroke="#000060" stroke-width="1" />
<line x1="716.5" y1="561" x2="716.5" y2="583" stroke="#000060" stroke-width="1" />
<line x1="716" y1="583.5" x2="787.5" y2="583.5" stroke="#f8f8f8" stroke-width="1" />
<line x1="787.5" y1="561" x2="787.5" y2="584" stroke="#f8f8f8" stroke-width="1" />
<text x="785.5" y="578.2" font-family="Liberation Sans" font-size="16" font-weight="normal" fill="#e4e4f4" text-anchor="end" >3.704</text>
<rect x="716" y="590" width="71" height="22" fill="#0505ee" />
<line x1="716" y1="590.5" x2="787" y2="590.5" stroke="#000060" stroke-width="1" />
<line x1="716.5" y1="590" x2="716.5" y2="612" stroke="#000060" stroke-width="1" />
<line x1="716" y1="612.5" x2="787.5" y2="612.5" stroke="#f8f8f8" stroke-width="1" />
<line x1="787.5" y1="590" x2="787.5" y2="613" stroke="#f8f8f8" stroke-width="1" />
<text x="785.5" y="607.2" font-family="Liberation Sans" font-size="16" font-weight="normal" fill="#e4e4f4" text-anchor="end" >1.10</text>
<rect x="716" y="620" width="71" height="22" fill="#0505ee" />
<line x1="716" y1="620.5" x2="787" y2="620.5" stroke="#000060" stroke-width="1" />
<line x1="716.5" y1="620" x2="716.5" y2="642" stroke="#000060" stroke-width="1" />
<line x1="716" y1="642.5" x2="787.5" y2="642.5" stroke="#f8f8f8" stroke-width="1" />
<line x1="787.5" y1="620" x2="787.5" y2="643" stroke="#f8f8f8" stroke-width="1" />
<text x="785.5" y="637.2" font-family="Liberation Sans" font-size="16" font-weight="normal" fill="#e4e4f4" text-anchor="end" >21.5</text>
<text x="672" y="579.8" font-family="Liberation Sans" font-size="16" font-weight="normal" fill="#1c1cc0" text-anchor="start" textLength="30.6" lengthAdjust="spacingAndGlyphs" >ratio</text>
<text x="672" y="608.8" font-family="Liberation Sans" font-size="16" font-weight="normal" fill="#1c1cc0" text-anchor="start" textLength="16.8" lengthAdjust="spacingAndGlyphs" >tcf</text>
<text x="672" y="638.2" font-family="Liberation Sans" font-size="16" font-weight="normal" fill="#1c1cc0" text-anchor="start" textLength="30" lengthAdjust="spacingAndGlyphs" >gain</text>
<rect x="397" y="551" width="4" height="102" fill="#d8d8d8" />
<line x1="0" y1="657.5" x2="800" y2="657.5" stroke="#404040" stroke-width="1" />
<rect x="0" y="658" width="800" height="45.5" fill="#ffffff" />
<defs><linearGradient id="sw2" x1="0" y1="1" x2="1" y2="0"><stop offset="0" stop-color="#ffff00"/><stop offset="0.4" stop-color="#ffff40"/><stop offset="0.7" stop-color="#ffffb0"/><stop offset="1" stop-color="#ffffff" stop-opacity="0"/></linearGradient><linearGradient id="silv" x1="0" x2="0" y1="0" y2="1"><stop offset="0" stop-color="#b4b4b4"/><stop offset="0.3" stop-color="#ffffff"/><stop offset="0.65" stop-color="#f4f4f6"/><stop offset="1" stop-color="#9898a8"/></linearGradient></defs>
<path d="M8,703 C12,690 30,684 60,680 C100,672 140,662 186,658 L186,684 C150,684 110,692 80,703 Z" fill="url(#sw2)"/>
<g font-family="Liberation Serif" font-weight="bold">
<text x="24.3" y="700.5999999999999" font-family="Liberation Sans" font-size="56" fill="#101010" stroke="#101010" stroke-width="4.800000000000001" stroke-linejoin="round" textLength="36" lengthAdjust="spacingAndGlyphs">a</text>
<text x="22.5" y="698.8" font-family="Liberation Sans" font-size="56" fill="url(#silv)" stroke="url(#silv)" stroke-width="3.2" stroke-linejoin="round" textLength="36" lengthAdjust="spacingAndGlyphs">a</text>
<text x="61.1" y="699.8000000000001" font-family="Liberation Serif" font-size="38" fill="#101010" stroke="#101010" stroke-width="4.2" stroke-linejoin="round" textLength="99" lengthAdjust="spacingAndGlyphs">muse</text>
<text x="59.5" y="698.2" font-family="Liberation Serif" font-size="38" fill="url(#silv)" stroke="url(#silv)" stroke-width="2.6" stroke-linejoin="round" textLength="99" lengthAdjust="spacingAndGlyphs">muse</text>
<text x="63.5" y="677.0" font-family="Liberation Serif" font-size="13" fill="#101010" stroke="#101010" stroke-width="1.9" stroke-linejoin="round" textLength="88" lengthAdjust="spacingAndGlyphs">power house</text>
<text x="62.5" y="676" font-family="Liberation Serif" font-size="13" fill="url(#silv)" stroke="url(#silv)" stroke-width="0.9" stroke-linejoin="round" textLength="88" lengthAdjust="spacingAndGlyphs">power house</text>
</g>
<line x1="192.5" y1="661" x2="192.5" y2="702" stroke="#909090" stroke-width="1" />
<text x="202" y="664.6" font-family="Liberation Sans" font-size="7" font-weight="bold" fill="#111" text-anchor="start" textLength="21" lengthAdjust="spacingAndGlyphs" >MEMO</text>
<line x1="228" y1="662.5" x2="309" y2="662.5" stroke="#a4a4a4" stroke-width="1" />
<line x1="199" y1="671.5" x2="309" y2="671.5" stroke="#a4a4a4" stroke-width="1" />
<line x1="199" y1="681" x2="309" y2="681" stroke="#a4a4a4" stroke-width="1" />
<line x1="199" y1="690.5" x2="309" y2="690.5" stroke="#a4a4a4" stroke-width="1" />
<line x1="199" y1="700.5" x2="309" y2="700.5" stroke="#a4a4a4" stroke-width="1" />
<text x="319" y="674.9" font-family="Liberation Sans" font-size="8.8" font-weight="bold" fill="#181818" text-anchor="start" textLength="31.5" lengthAdjust="spacingAndGlyphs" >Folder</text>
<text x="320" y="692.9" font-family="Liberation Sans" font-size="8.8" font-weight="bold" fill="#181818" text-anchor="start" textLength="32" lengthAdjust="spacingAndGlyphs" >Run ID</text>
<rect x="356" y="664.5" width="124.5" height="13.5" fill="#ffffff" />
<line x1="356" y1="665.25" x2="480.5" y2="665.25" stroke="#707070" stroke-width="1.5" />
<line x1="356.75" y1="664.5" x2="356.75" y2="678.0" stroke="#707070" stroke-width="1.5" />
<line x1="356" y1="677.5" x2="480.5" y2="677.5" stroke="#d4d0c8" stroke-width="1" />
<line x1="480" y1="664.5" x2="480" y2="678.0" stroke="#d4d0c8" stroke-width="1" />
<text x="357.5" y="674.7" font-family="Liberation Sans" font-size="9.4" font-weight="normal" fill="#141414" text-anchor="start" textLength="45" lengthAdjust="spacingAndGlyphs" >R35GTR</text>
<rect x="356" y="683" width="124.5" height="13.5" fill="#ffffff" />
<line x1="356" y1="683.75" x2="480.5" y2="683.75" stroke="#707070" stroke-width="1.5" />
<line x1="356.75" y1="683" x2="356.75" y2="696.5" stroke="#707070" stroke-width="1.5" />
<line x1="356" y1="696" x2="480.5" y2="696" stroke="#d4d0c8" stroke-width="1" />
<line x1="480" y1="683" x2="480" y2="696.5" stroke="#d4d0c8" stroke-width="1" />
<text x="357.5" y="693.2" font-family="Liberation Sans" font-size="9.4" font-weight="normal" fill="#141414" text-anchor="start" textLength="90" lengthAdjust="spacingAndGlyphs" >R1 TITAN 90spec</text>
<line x1="356" y1="702" x2="480.5" y2="702" stroke="#a8a8a8" stroke-width="1" />
<g font-family="Liberation Sans" font-weight="bold" font-style="italic" font-size="30" stroke-linejoin="round">
<text x="504.5" y="698" fill="#2058c0" stroke="#2058c0" stroke-width="2.8" textLength="136" lengthAdjust="spacingAndGlyphs">Dyna</text>
<text x="641.5" y="698" fill="#d81828" stroke="#d81828" stroke-width="2.8" textLength="129" lengthAdjust="spacingAndGlyphs">pack</text>
<text x="508" y="692.6" fill="#fff" stroke="#fff" stroke-width="5.5" textLength="136" lengthAdjust="spacingAndGlyphs">Dyna</text>
<text x="645" y="692.6" fill="#fff" stroke="#fff" stroke-width="5.5" textLength="129" lengthAdjust="spacingAndGlyphs">pack</text>
<text x="508" y="692.6" fill="#dc1a2a" stroke="#dc1a2a" stroke-width="2.8" textLength="136" lengthAdjust="spacingAndGlyphs">Dyna</text>
<text x="645" y="692.6" fill="#1a64c4" stroke="#1a64c4" stroke-width="2.8" textLength="129" lengthAdjust="spacingAndGlyphs">pack</text>
</g>
<rect x="0" y="703.5" width="800" height="16.5" fill="#d4d0c8" />
<line x1="0" y1="704" x2="800" y2="704" stroke="#ffffff" stroke-width="1" />
<rect x="1" y="705" width="32" height="13.5" fill="#d4d0c8" stroke="#808080" stroke-width="0.8"/>
<line x1="1.5" y1="705.5" x2="32.5" y2="705.5" stroke="#fff" stroke-width="1" />
<line x1="1.5" y1="705.5" x2="1.5" y2="718" stroke="#fff" stroke-width="1" />
<rect x="3" y="708" width="4" height="4" fill="#e04020" />
<rect x="7.5" y="708" width="4" height="4" fill="#40b030" />
<rect x="3" y="712.5" width="4" height="4" fill="#2060d0" />
<rect x="7.5" y="712.5" width="4" height="4" fill="#f0c020" />
<text x="13.6" y="715.6" font-family="Liberation Sans" font-size="8.6" font-weight="bold" fill="#000" text-anchor="start" textLength="17.6" lengthAdjust="spacingAndGlyphs" stroke="#000" stroke-width="0.35">Start</text>
<line x1="38.5" y1="705" x2="38.5" y2="719" stroke="#808080" stroke-width="1" />
<line x1="39.5" y1="705" x2="39.5" y2="719" stroke="#fff" stroke-width="1" />
<rect x="42" y="705" width="101" height="14" fill="#e6e4de" />
<line x1="42" y1="705.5" x2="143" y2="705.5" stroke="#505050" stroke-width="1" />
<line x1="42.5" y1="705" x2="42.5" y2="719" stroke="#505050" stroke-width="1" />
<line x1="42" y1="718.5" x2="143" y2="718.5" stroke="#fff" stroke-width="1" />
<line x1="142.5" y1="705" x2="142.5" y2="719" stroke="#fff" stroke-width="1" />
<rect x="45" y="707" width="9" height="10" fill="#f0f0f0" stroke="#909090" stroke-width="0.6"/>
<line x1="46" y1="716" x2="53" y2="708" stroke="#b04040" stroke-width="0.8" />
<text x="58" y="715.6" font-family="Liberation Sans" font-size="8.6" font-weight="bold" fill="#000" text-anchor="start" textLength="34.4" lengthAdjust="spacingAndGlyphs" stroke="#000" stroke-width="0.35">Dynapack</text>
<text x="620" y="714.5" font-family="Liberation Sans" font-size="8" font-weight="normal" fill="#000" text-anchor="start" textLength="25" lengthAdjust="spacingAndGlyphs" >Desktop</text>
<rect x="650" y="707" width="10" height="9" fill="#f0e090" stroke="#908040" stroke-width="0.6"/>
<text x="662" y="714.5" font-family="Liberation Sans" font-size="8" font-weight="normal" fill="#000" text-anchor="start" textLength="20" lengthAdjust="spacingAndGlyphs" >My Do</text>
<text x="687" y="714" font-family="Liberation Sans" font-size="10" font-weight="bold" fill="#000" text-anchor="start" textLength="5" lengthAdjust="spacingAndGlyphs" >»</text>
<line x1="694.5" y1="705" x2="694.5" y2="719" stroke="#808080" stroke-width="1" />
<rect x="698.5" y="705" width="99.5" height="14" fill="#d4d0c8" />
<line x1="698.5" y1="705.5" x2="798" y2="705.5" stroke="#808080" stroke-width="1" />
<line x1="699" y1="705" x2="699" y2="719" stroke="#808080" stroke-width="1" />
<line x1="698.5" y1="718.5" x2="798" y2="718.5" stroke="#fff" stroke-width="1" />
<line x1="797.5" y1="705" x2="797.5" y2="719" stroke="#fff" stroke-width="1" />
<rect x="702" y="708" width="5" height="6" fill="#304080" />
<path d="M703,716 L709,709 M703,709 L709,716" stroke="#e03030" stroke-width="1.4"/>
<path d="M709,707.5 L714,712 L709,716.5 Z" fill="#e03030"/><path d="M713,707.5 L717.5,712 L713,716.5" fill="none" stroke="#2030c0" stroke-width="1.5"/>
<rect x="722" y="707" width="4" height="4" fill="#50a050" />
<rect x="723.5" y="711" width="6" height="5" fill="#60a860" stroke="#406040" stroke-width="0.5"/>
<circle cx="738" cy="712" r="4.2" fill="#2a8ad0"/><path d="M736,714 L740,710" stroke="#fff" stroke-width="1"/><circle cx="740.5" cy="714.5" r="2" fill="#f0b000"/>
<rect x="746.5" y="707.5" width="6.5" height="8" fill="#10e010" stroke="#105010" stroke-width="0.6"/>
<text x="762" y="714.5" font-family="Liberation Sans" font-size="8.5" font-weight="normal" fill="#000" text-anchor="start" textLength="29" lengthAdjust="spacingAndGlyphs" >8:02 p.m.</text>
</svg>
</body></html>
